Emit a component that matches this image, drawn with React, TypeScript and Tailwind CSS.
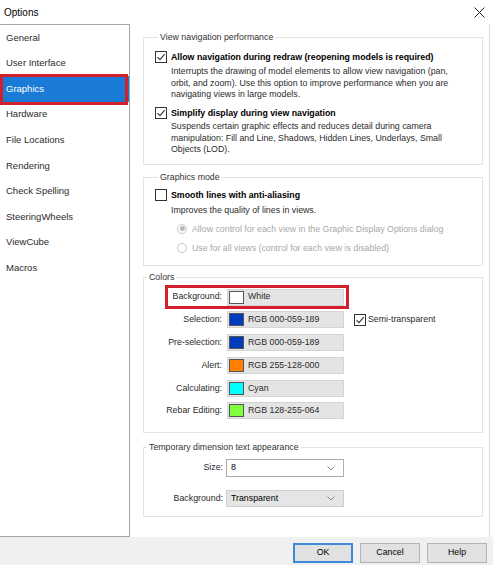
import type { ReactNode } from "react";

const pages = [
  "General",
  "User Interface",
  "Graphics",
  "Hardware",
  "File Locations",
  "Rendering",
  "Check Spelling",
  "SteeringWheels",
  "ViewCube",
  "Macros",
];

const colorRows = [
  { label: "Background:", swatch: "#ffffff", value: "White" },
  { label: "Selection:", swatch: "#003bbd", value: "RGB 000-059-189" },
  { label: "Pre-selection:", swatch: "#003bbd", value: "RGB 000-059-189" },
  { label: "Alert:", swatch: "#ff8000", value: "RGB 255-128-000" },
  { label: "Calculating:", swatch: "#00ffff", value: "Cyan" },
  { label: "Rebar Editing:", swatch: "#80ff40", value: "RGB 128-255-064" },
];

function CheckBox({ checked }: { checked?: boolean }) {
  return (
    <span className="flex h-[12px] w-[12px] shrink-0 items-center justify-center border border-[#333] bg-white">
      {checked && (
        <svg width="10" height="10" viewBox="0 0 10 10">
          <path d="M1.5 5.2 L4 7.6 L8.6 2.2" fill="none" stroke="#333" strokeWidth="1.1" />
        </svg>
      )}
    </span>
  );
}

function Radio({ on }: { on?: boolean }) {
  return (
    <span className="flex h-[10px] w-[10px] shrink-0 items-center justify-center rounded-full border border-[#c8c8c8] bg-white">
      {on && <span className="h-[5px] w-[5px] rounded-full bg-[#b8b8b8]" />}
    </span>
  );
}

function Group({ title, className, children }: { title: string; className: string; children: ReactNode }) {
  return (
    <fieldset className={`border border-[#e3e3e3] ${className}`}>
      <legend className="ml-[3px] px-[2px] leading-[11px] text-[#333]">{title}</legend>
      {children}
    </fieldset>
  );
}

function Chevron() {
  return (
    <svg width="8" height="5" viewBox="0 0 8 5" className="mr-[8px]">
      <path d="M0.5 0.5 L4 4 L7.5 0.5" fill="none" stroke="#888" strokeWidth="1" />
    </svg>
  );
}

export default function App() {
  return (
    <div className="flex h-[565px] w-[493px] flex-col overflow-hidden bg-white font-['Liberation_Sans',Arial,sans-serif] text-[8.8px] text-[#2b2b2b]">
      {/* title bar */}
      <div className="flex h-[24px] shrink-0 items-center justify-between pl-[4px] pr-[8px]">
        <span className="text-[10px] text-black">Options</span>
        <svg width="11" height="11" viewBox="0 0 11 11">
          <path d="M0.5 0.5 L10.5 10.5 M10.5 0.5 L0.5 10.5" stroke="#222" strokeWidth="1" />
        </svg>
      </div>

      <div className="flex min-h-0 flex-1">
        {/* page list */}
        <div className="w-[130px] shrink-0 border border-l-0 border-[#a5a5a5] text-[9.5px]">
          {pages.map((p) => (
            <div
              key={p}
              className={`relative flex h-[25.6px] items-center pl-[6px] ${
                p === "Graphics" ? "bg-[#1a7bd6] text-white" : "text-[#2b2b2b]"
              }`}
            >
              {p}
              {p === "Graphics" && (
                <span className="absolute -top-[2px] -bottom-[3px] left-0 right-[1px] border-[3px] border-[#d2202c]" />
              )}
            </div>
          ))}
        </div>

        {/* settings pane */}
        <div className="ml-[4px] mr-[3px] flex flex-1 flex-col border-r border-[#dcdcdc] pl-[9px] pr-[6px]">
          <Group title="View navigation performance" className="mt-[8px] h-[133px] pl-[11px] pr-[4px]">
            <div className="mt-[8px] flex gap-[4px]">
              <CheckBox checked />
              <div>
                <div className="font-bold leading-[12px] text-black">
                  Allow navigation during redraw (reopening models is required)
                </div>
                <div className="mt-[3px] leading-[11.5px]">
                  Interrupts the drawing of model elements to allow view navigation (pan,
                  <br />
                  orbit, and zoom). Use this option to improve performance when you are
                  <br />
                  navigating views in large models.
                </div>
              </div>
            </div>
            <div className="mt-[6px] flex gap-[4px]">
              <CheckBox checked />
              <div>
                <div className="font-bold leading-[12px] text-black">Simplify display during view navigation</div>
                <div className="mt-[2.5px] leading-[11.5px]">
                  Suspends certain graphic effects and reduces detail during camera
                  <br />
                  manipulation: Fill and Line, Shadows, Hidden Lines, Underlays, Small
                  <br />
                  Objects (LOD).
                </div>
              </div>
            </div>
          </Group>

          <Group title="Graphics mode" className="mt-[7px] h-[94px] pl-[11px]">
            <div className="mt-[6px] flex gap-[4px]">
              <CheckBox />
              <div>
                <div className="font-bold leading-[12px] text-black">Smooth lines with anti-aliasing</div>
                <div className="mt-[4px] leading-[11.5px]">Improves the quality of lines in views.</div>
              </div>
            </div>
            <div className="ml-[22px] mt-[6px] flex items-center gap-[5px] leading-[12px] text-[#a8a8a8]">
              <Radio on />
              Allow control for each view in the Graphic Display Options dialog
            </div>
            <div className="ml-[22px] mt-[7px] flex items-center gap-[5px] leading-[12px] text-[#a8a8a8]">
              <Radio />
              Use for all views (control for each view is disabled)
            </div>
          </Group>

          <Group title="Colors" className="mt-[6px] h-[161px]">
            <div className="mt-[5.5px] flex flex-col gap-[5.8px]">
              {colorRows.map((r) => (
                <div key={r.label} className="relative flex h-[17px] items-center">
                  <span className="w-[79px] pr-[1px] text-right">{r.label}</span>
                  <span className="ml-[4px] flex h-[17px] w-[117px] items-center gap-[4px] border border-[#d4d4d4] bg-[#e4e4e4] pl-[1px]">
                    <span className="h-[13px] w-[15px] border border-[#555]" style={{ backgroundColor: r.swatch }} />
                    <span>{r.value}</span>
                  </span>
                  {r.label === "Selection:" && (
                    <span className="ml-[10px] flex items-center gap-[2px]">
                      <CheckBox checked />
                      Semi-transparent
                    </span>
                  )}
                  {r.label === "Background:" && (
                    <span className="absolute -top-[3.5px] left-[21px] h-[24px] w-[184px] border-[3px] border-[#d2202c]" />
                  )}
                </div>
              ))}
            </div>
          </Group>

          <Group title="Temporary dimension text appearance" className="mt-[9px] h-[75px]">
            <div className="mt-[6px] flex h-[18px] items-center">
              <span className="w-[80px] pr-[1px] text-right">Size:</span>
              <span className="ml-[2px] flex h-[18px] w-[118px] items-center justify-between border border-[#adadad] bg-white pl-[4px] text-black">
                8
                <Chevron />
              </span>
            </div>
            <div className="mt-[13px] flex h-[17px] items-center">
              <span className="w-[80px] pr-[1px] text-right">Background:</span>
              <span className="ml-[2px] flex h-[17px] w-[118px] items-center justify-between border border-[#d0d0d0] bg-[#e5e5e5] pl-[4px] text-black">
                Transparent
                <Chevron />
              </span>
            </div>
          </Group>
        </div>
      </div>

      {/* dialog buttons */}
      <div className="flex h-[28px] shrink-0 items-start justify-end gap-[7px] bg-[#f0f0f0] pr-[6px] pt-[6px]">
        <button className="h-[20px] w-[60px] border-2 border-[#3c8ad8] bg-[#e1e1e1] text-black">OK</button>
        <button className="h-[20px] w-[60px] border border-[#b4b4b4] bg-[#e1e1e1] text-black">Cancel</button>
        <button className="h-[20px] w-[60px] border border-[#b4b4b4] bg-[#e1e1e1] text-black">Help</button>
      </div>
    </div>
  );
}
